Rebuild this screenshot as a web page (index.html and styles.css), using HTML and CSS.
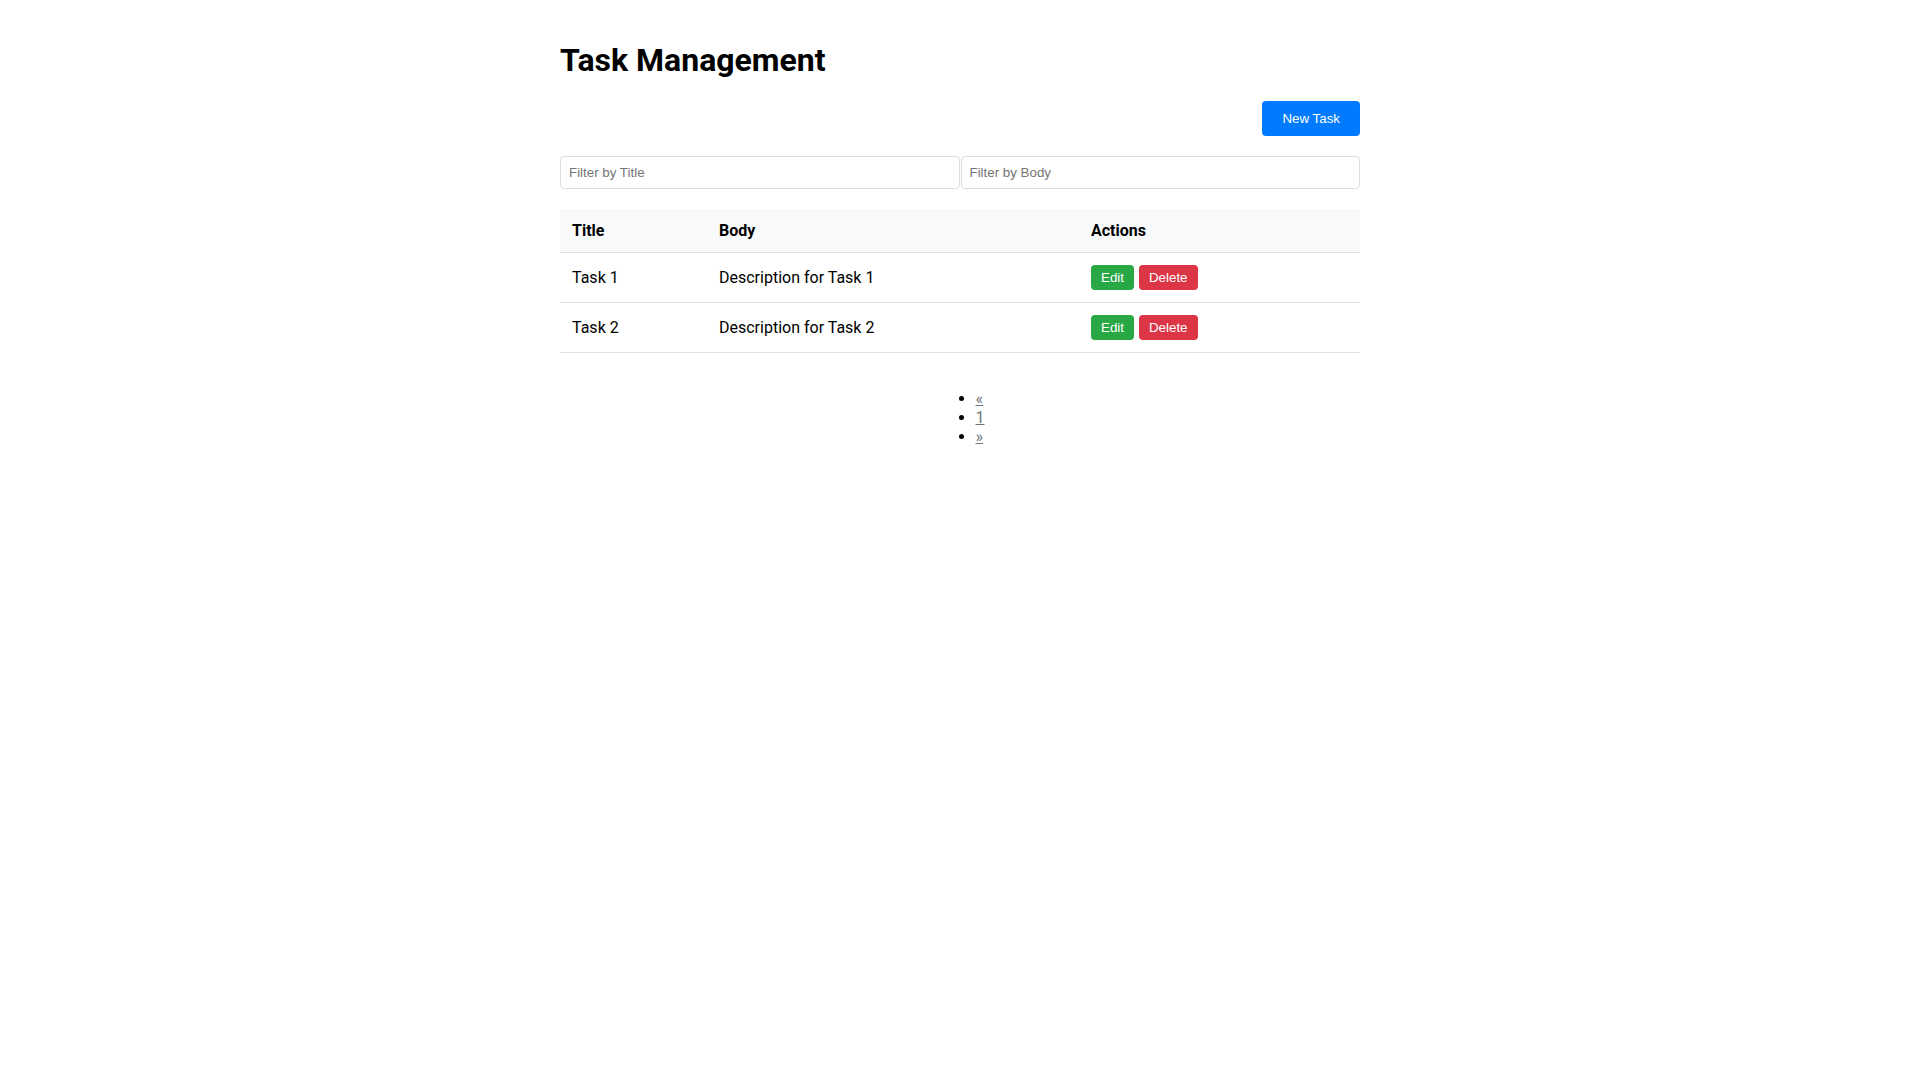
FILE: index.html
```html
<!DOCTYPE html>
<html lang="en">
  <head>
    <meta charset="UTF-8" />
    <meta name="viewport" content="width=device-width, initial-scale=1.0" />
    <title>Task Management</title>
    <link rel="stylesheet" href="styles.css">
  </head>
  <body>
    <div class="container">
      <h1>Task Management</h1>
      <div class="toolbar">
        <button class="btn btn-primary">New Task</button>
      </div>
      <div class="filters">
        <input type="text" placeholder="Filter by Title" />
        <input type="text" placeholder="Filter by Body" />
      </div>
      <table class="task-table">
        <thead>
          <tr>
            <th class="col-title">Title</th>
            <th class="col-body">Body</th>
            <th class="col-actions">Actions</th>
          </tr>
        </thead>
        <tbody>
          <tr>
            <td>Task 1</td>
            <td>Description for Task 1</td>
            <td><button class="btn-sm btn-success">Edit</button><button class="btn-sm btn-danger">Delete</button></td>
          </tr>
          <tr>
            <td>Task 2</td>
            <td>Description for Task 2</td>
            <td><button class="btn-sm btn-success">Edit</button><button class="btn-sm btn-danger">Delete</button></td>
          </tr>
        </tbody>
      </table>
      <ul class="pagination">
        <li><a href="#">&laquo;</a></li>
        <li><a href="#">1</a></li>
        <li><a href="#">&raquo;</a></li>
      </ul>
    </div>
  </body>
</html>
```

FILE: styles.css
```css
body {
  font-family: Roboto, "Liberation Sans", Arial, sans-serif;
  margin: 0;
  background-color: white;
  color: #000;
}
.container {
  max-width: 800px;
  margin: 0 auto;
  padding-top: 20px;
}
h1 {
  font-size: 32px;
  font-weight: bold;
  margin: 21px 0 22px;
}
.toolbar {
  display: flex;
  justify-content: flex-end;
  margin-bottom: 20px;
}
button {
  font-family: "Liberation Sans", Arial, sans-serif;
  font-size: 13.33px;
  color: white;
  border: none;
  border-radius: 4px;
  cursor: pointer;
}
.btn {
  padding: 10px 20px;
}
.btn-sm {
  padding: 5px 10px;
  margin-right: 5px;
}
.btn-primary {
  background-color: #007bff;
}
.btn-success {
  background-color: #28a745;
}
.btn-danger {
  background-color: #dc3545;
}
.filters {
  display: flex;
  gap: 1px;
  margin-bottom: 20px;
}
.filters input {
  flex: 1;
  font-family: "Liberation Sans", Arial, sans-serif;
  font-size: 13.33px;
  padding: 8px;
  border: 1px solid #ddd;
  border-radius: 4px;
  box-sizing: border-box;
}
.filters input::placeholder {
  color: #757575;
}
.task-table {
  width: 100%;
  border-collapse: collapse;
  table-layout: fixed;
  font-size: 16px;
}
.col-title {
  width: 123px;
}
.col-body {
  width: 348px;
}
.task-table th,
.task-table td {
  padding: 12px;
  text-align: left;
  border-bottom: 1px solid #dee2e6;
  vertical-align: middle;
}
.task-table th {
  background-color: #f8f9fa;
  font-weight: bold;
}
.pagination {
  width: fit-content;
  margin: 36px auto 0;
  font-size: 16px;
}
.pagination a {
  color: #6c757d;
}
```
